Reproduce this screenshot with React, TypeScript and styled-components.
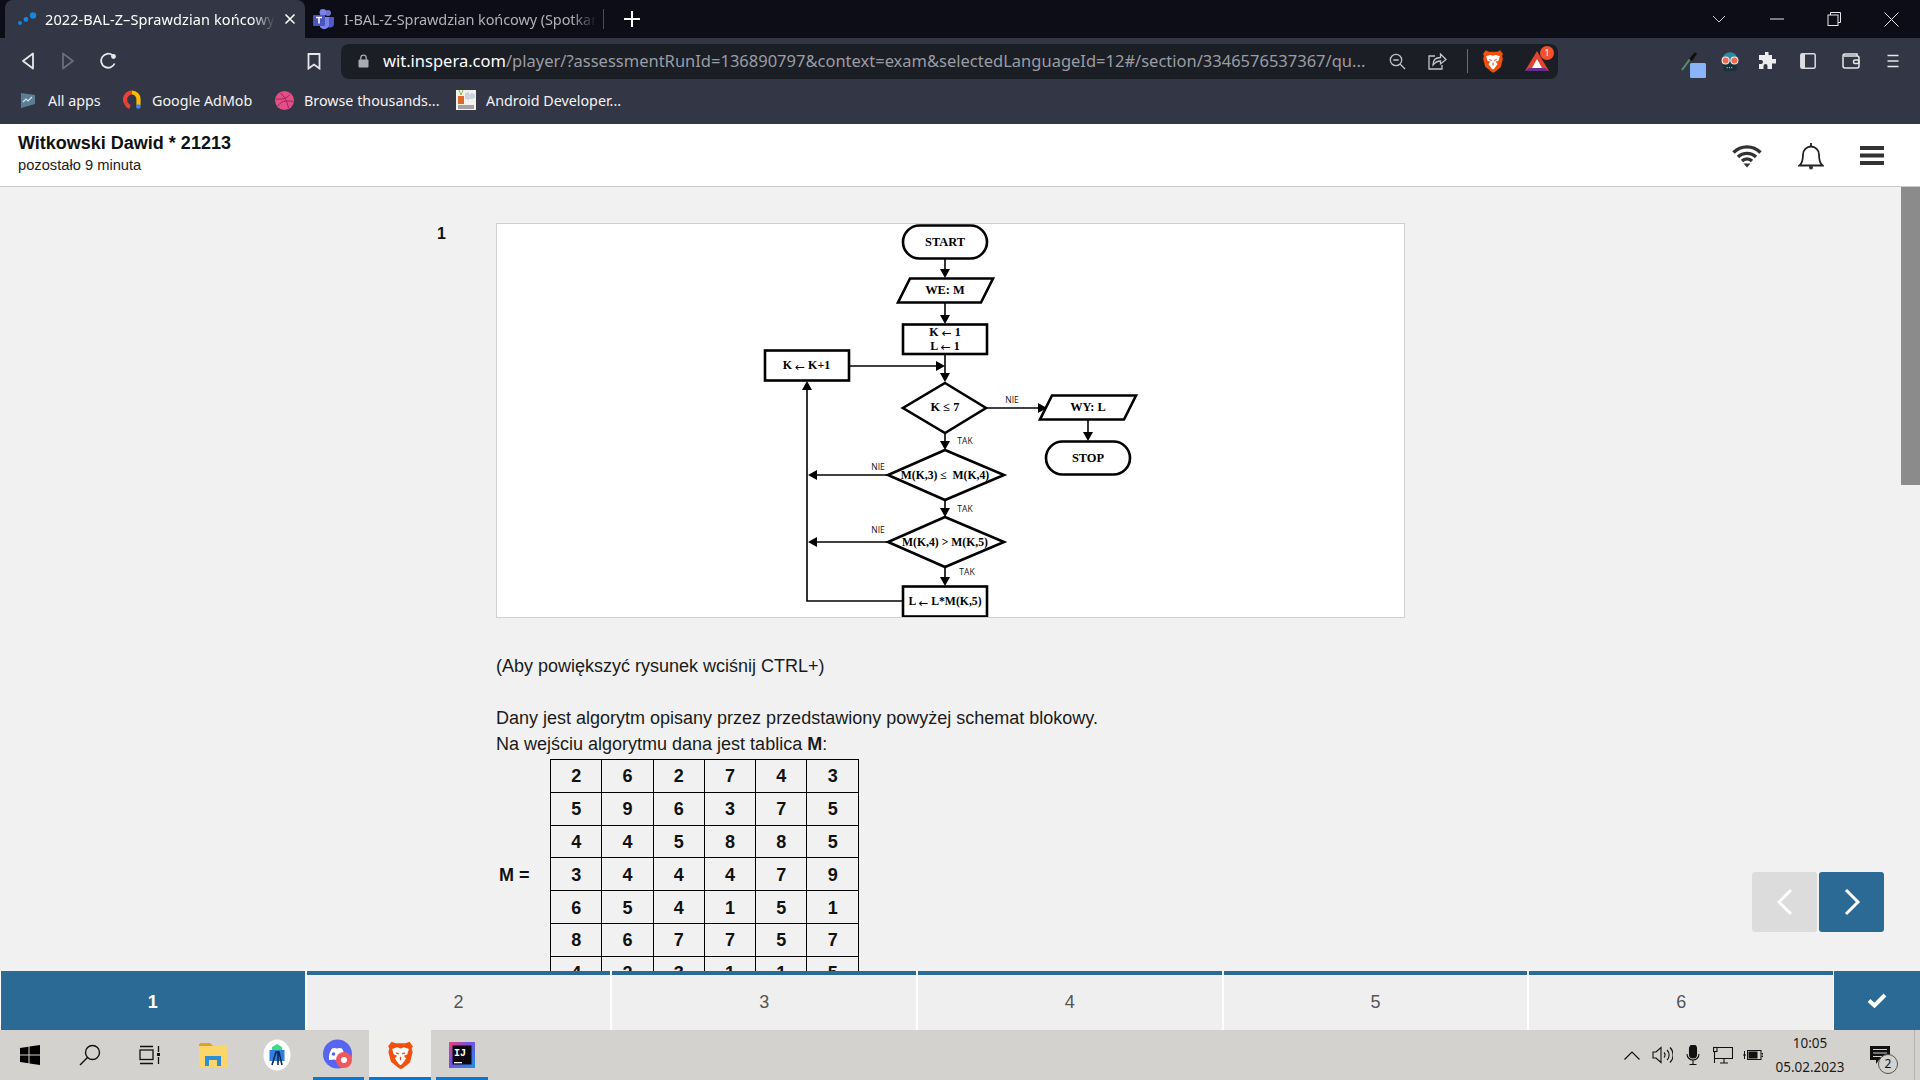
import React from 'react';
import styled, { createGlobalStyle } from 'styled-components';

const BLUE = '#2b6a94';

const GlobalStyle = createGlobalStyle`
    html, body {
        margin: 0;
        padding: 0;
        background: #f1f1f1;
    }
    * {
        box-sizing: border-box;
    }
`;

/* ---------- browser chrome ---------- */

const Page = styled.div`
    width: 1920px;
    height: 1080px;
    display: flex;
    flex-direction: column;
    overflow: hidden;
    position: relative;
    font-family: 'Liberation Sans', Arial, sans-serif;
`;

const TabStrip = styled.div`
    height: 38px;
    flex: none;
    display: flex;
    align-items: stretch;
    background: #0c0d17;
    padding-left: 5px;
    font-family: 'Noto Sans', sans-serif;
    font-size: 14.5px;
`;

const Tab = styled.div<{ $active?: boolean }>`
    width: 300px;
    display: flex;
    align-items: center;
    padding-left: ${(p) => (p.$active ? '12px' : '8px')};
    border-radius: 8px 8px 0 0;
    letter-spacing: ${(p) => (p.$active ? '0.1px' : '-0.1px')};
    color: ${(p) => (p.$active ? '#ffffff' : '#b0b2b8')};
    background: ${(p) => (p.$active ? '#333644' : 'transparent')};
`;

const TabTitle = styled.div<{ $width: number; $ml: number }>`
    width: ${(p) => p.$width}px;
    margin-left: ${(p) => p.$ml}px;
    white-space: nowrap;
    -webkit-mask-image: linear-gradient(to right, #000 90%, transparent 100%);
    mask-image: linear-gradient(to right, #000 90%, transparent 100%);
`;

const TabClose = styled.div`
    margin-left: 9px;
    display: flex;
`;

const TabDivider = styled.div`
    width: 1px;
    height: 20px;
    margin: 9px 0 0 -2px;
    background: #4a4c57;
`;

const NewTab = styled.div`
    margin-left: 20px;
    display: flex;
    align-items: center;
`;

const WindowControls = styled.div`
    margin-left: auto;
    display: flex;
    align-items: center;
`;

const WindowButton = styled.div<{ $w?: number }>`
    width: ${(p) => p.$w ?? 58}px;
    height: 38px;
    display: flex;
    align-items: center;
    justify-content: center;
`;

const Toolbar = styled.div`
    height: 46px;
    flex: none;
    display: flex;
    align-items: center;
    background: #333644;
`;

const NavGroup = styled.div`
    width: 341px;
    flex: none;
    display: flex;
    align-items: center;
    padding-left: 8px;
`;

const ToolButton = styled.div<{ $w?: number; $ml?: number }>`
    width: ${(p) => p.$w ?? 40}px;
    height: 36px;
    flex: none;
    margin-left: ${(p) => p.$ml ?? 0}px;
    display: flex;
    align-items: center;
    justify-content: center;
    position: relative;
`;

const Address = styled.div`
    width: 1217px;
    height: 35px;
    flex: none;
    display: flex;
    align-items: center;
    background: #1c1e26;
    border-radius: 8px;
    padding: 0 0 0 17px;
`;

const UrlText = styled.div`
    width: 984px;
    flex: none;
    margin-left: 14px;
    margin-right: 10px;
    padding-bottom: 2px;
    white-space: nowrap;
    font-family: 'Noto Sans', sans-serif;
    font-size: 16.5px;
    color: #9a9ca3;

    b {
        font-weight: 400;
        color: #ffffff;
    }
`;

const AddressDivider = styled.div`
    width: 1px;
    height: 24px;
    flex: none;
    margin: 0 10px;
    background: #6b6d75;
`;

const Badge = styled.span`
    position: absolute;
    top: 3px;
    right: 3px;
    width: 14px;
    height: 14px;
    border-radius: 50%;
    background: #f4512c;
    color: #ffffff;
    font-family: 'Noto Sans', sans-serif;
    font-size: 9px;
    line-height: 14px;
    text-align: center;
`;

const BookmarkBar = styled.div`
    height: 40px;
    flex: none;
    display: flex;
    align-items: center;
    background: #333644;
    padding: 0 0 8px 20px;
    font-family: 'Noto Sans', sans-serif;
    font-size: 14.3px;
    color: #f2f2f4;
`;

const Bookmark = styled.div<{ $w: number; $gap?: number }>`
    width: ${(p) => p.$w}px;
    flex: none;
    display: flex;
    align-items: center;
    gap: ${(p) => p.$gap ?? 10}px;
    white-space: nowrap;
`;

/* ---------- exam header ---------- */

const Header = styled.header`
    height: 63px;
    flex: none;
    display: flex;
    align-items: center;
    justify-content: space-between;
    background: #ffffff;
    border-bottom: 1px solid #c9c9c9;
    padding: 0 36px 4px 18px;
`;

const Candidate = styled.div`
    font-size: 18px;
    font-weight: 700;
    line-height: 24px;
    color: #111111;
`;

const TimeLeft = styled.div`
    font-size: 14.7px;
    line-height: 20px;
    color: #222222;
`;

const HeaderIcons = styled.div`
    display: flex;
    align-items: center;
    gap: 36px;
    padding-top: 5px;
`;

/* ---------- question ---------- */

const Body = styled.div`
    flex: 1;
    min-height: 0;
    display: flex;
`;

const Content = styled.main`
    flex: 1;
    overflow: hidden;
    display: flex;
    padding: 36px 0 0 437px;
    background: #f1f1f1;
`;

const QuestionNumber = styled.div`
    width: 59px;
    flex: none;
    font-size: 16px;
    font-weight: 700;
    line-height: 22px;
    color: #111111;
`;

const Question = styled.div`
    width: 909px;
    flex: none;
    font-size: 18px;
    line-height: 26px;
    color: #1a1a1a;
`;

const FigureCard = styled.div`
    height: 395px;
    background: #ffffff;
    border: 1px solid #cfcfcf;

    svg {
        display: block;
    }
`;

const Paragraph = styled.p<{ $mt?: number }>`
    margin: ${(p) => p.$mt ?? 0}px 0 0;
`;

const MatrixRow = styled.div`
    display: flex;
    align-items: center;
    margin-top: 2px;
`;

const MatrixLabel = styled.div`
    width: 54px;
    padding: 2px 0 0 3px;
    flex: none;
    font-weight: 700;
    color: #111111;
`;

const Matrix = styled.table`
    border-collapse: collapse;
    font-weight: 700;
    color: #111111;

    td {
        width: 51.3px;
        height: 32.8px;
        padding: 1px 0 0;
        border: 1px solid #000000;
        text-align: center;
    }
`;

const Scrollbar = styled.div`
    width: 19px;
    flex: none;
    background: #f1f1f1;
`;

const ScrollThumb = styled.div`
    height: 298px;
    background: #8b8b8b;
`;

const PagerButtons = styled.div`
    position: absolute;
    left: 1752px;
    top: 872px;
    display: flex;
    gap: 2px;
`;

const PagerButton = styled.div<{ $enabled?: boolean }>`
    width: 65px;
    height: 60px;
    display: flex;
    align-items: center;
    justify-content: center;
    border-radius: 3px;
    background: ${(p) => (p.$enabled ? BLUE : '#dcdcdc')};
`;

const QuestionNav = styled.nav`
    height: 59px;
    flex: none;
    display: flex;
    gap: 2px;
    padding-left: 1px;
    background: #ffffff;
`;

const NavItem = styled.div<{ $current?: boolean }>`
    flex: 1;
    display: flex;
    align-items: center;
    justify-content: center;
    border-top: 4px solid ${BLUE};
    background: ${(p) => (p.$current ? BLUE : '#efefef')};
    color: ${(p) => (p.$current ? '#ffffff' : '#555555')};
    font-size: 18px;
    font-weight: ${(p) => (p.$current ? 700 : 400)};
`;

const SubmitItem = styled.div`
    width: 86px;
    flex: none;
    margin-left: -1px;
    display: flex;
    align-items: center;
    justify-content: center;
    background: ${BLUE};
`;

/* ---------- windows taskbar ---------- */

const Taskbar = styled.footer`
    height: 50px;
    flex: none;
    display: flex;
    align-items: stretch;
    background: #d3d2cf;
`;

const TaskItem = styled.div<{ $w: number; $active?: boolean; $running?: boolean }>`
    width: ${(p) => p.$w}px;
    flex: none;
    display: flex;
    align-items: center;
    justify-content: center;
    position: relative;
    background: ${(p) => (p.$active ? '#efefed' : 'transparent')};

    &::after {
        content: '';
        display: ${(p) => (p.$running ? 'block' : 'none')};
        position: absolute;
        left: ${(p) => (p.$active ? 0 : 5)}px;
        right: ${(p) => (p.$active ? 0 : 5)}px;
        bottom: 0;
        height: 3px;
        background: #0a78d0;
    }
`;

const Tray = styled.div`
    margin-left: auto;
    display: flex;
    align-items: center;
    padding-right: 5px;
`;

const TrayIcon = styled.div<{ $w: number }>`
    width: ${(p) => p.$w}px;
    height: 100%;
    flex: none;
    display: flex;
    align-items: center;
    justify-content: center;
`;

const Clock = styled.div`
    width: 70px;
    flex: none;
    margin-left: 9px;
    text-align: center;
    white-space: nowrap;
    font-family: 'Noto Sans', sans-serif;
    font-size: 13.5px;
    line-height: 24px;
    color: #1c1c1c;
`;

const Notifications = styled.div`
    width: 70px;
    height: 100%;
    flex: none;
    display: flex;
    align-items: center;
    justify-content: center;
    position: relative;
    border-right: 1px solid #b5b4b1;
`;

const NotificationCount = styled.span`
    position: absolute;
    left: 33px;
    top: 24px;
    width: 20px;
    height: 20px;
    border: 1px solid #555555;
    border-radius: 50%;
    background: #d3d2cf;
    color: #111111;
    font-family: 'Noto Sans', sans-serif;
    font-size: 12px;
    line-height: 18px;
    text-align: center;
`;

/* ---------- icons ---------- */

const BraveLogo = ({ size }: { size: number }) => (
    <svg width={size} height={size * 1.12} viewBox="0 0 24 27">
        <path d="M4 1.5 7.5 3h9L20 1.5l3 4-1 2 .8 3.5-2.3 9-6.5 5.3L12 26l-2-1.2-6.5-5.3L1.2 11 2 7.5l-1-2z" fill="#f1500f" />
        <path d="M4.5 8 9 6.5l3 1 3-1L19.5 8 18 13l-3 1 2 2.5-3.500 5-1.500 1-1.500-1L7 16.500 9 14l-3-1z" fill="#ffffff" />
        <path d="M8 11.500l2.500 1M16 11.500l-2.500 1M12 15v3" stroke="#f1500f" strokeWidth="1.2" />
    </svg>
);

const Chevron = ({ left }: { left?: boolean }) => (
    <svg width="20" height="30" viewBox="0 0 20 30" fill="none" stroke="#ffffff" strokeWidth="3">
        <path d={left ? 'M16 3 4 15l12 12' : 'M4 3l12 12L4 27'} />
    </svg>
);

// the picture uses a symbol font for the arrow, the serif one draws it far too short
const nodeLabel = (text: string) =>
    text.split('←').map((part, i) => (
        <React.Fragment key={i}>
            {i > 0 && (
                <tspan fontFamily="'DejaVu Sans', sans-serif" fontWeight="400">
                    ←
                </tspan>
            )}
            {part}
        </React.Fragment>
    ));

const Flowchart = () => {
    const ink = '#000000';
    const down = (x: number, tip: number) => `${x - 5},${tip - 9} ${x + 5},${tip - 9} ${x},${tip}`;
    const vArrows: [number, number, number][] = [
        [945, 259, 278],
        [945, 303, 324],
        [945, 354, 382],
        [1088, 420, 441],
        [945, 433, 450],
        [945, 500, 517],
        [945, 567, 586],
    ];
    const labels: [number, number, string][] = [
        [1012, 400.5, 'NIE'],
        [965, 442, 'TAK'],
        [878, 468, 'NIE'],
        [965, 510, 'TAK'],
        [878, 531, 'NIE'],
        [967, 573, 'TAK'],
    ];
    const nodes: [number, number, string, number][] = [
        [945, 243.5, 'START', 12.4],
        [945, 291.5, 'WE: M', 12.4],
        [945, 333, 'K ← 1', 12],
        [945, 347, 'L ← 1', 12],
        [806.5, 366.5, 'K ← K+1', 12],
        [945, 408.5, 'K ≤ 7', 12.4],
        [1088, 408.5, 'WY: L', 12.4],
        [1088, 459.5, 'STOP', 12.4],
        [945, 476.5, 'M(K,3) ≤  M(K,4)', 11.7],
        [945, 543.5, 'M(K,4) > M(K,5)', 11.7],
        [945, 602.5, 'L ← L*M(K,5)', 11.7],
    ];

    return (
        <svg width="907" height="393" viewBox="497 224 907 393">
            <g fill="#ffffff" stroke={ink} strokeWidth="2.6">
                <rect x="903" y="225.5" width="84" height="33" rx="16.5" />
                <polygon points="910,278.5 993,278.5 981,302.5 898,302.5" />
                <rect x="903" y="324.5" width="84" height="29.5" />
                <rect x="765" y="350.5" width="84" height="30" />
                <polygon points="945,383 986,408 945,433 903,408" />
                <polygon points="1052,395.5 1136,395.5 1124,419.5 1040,419.5" />
                <rect x="1046" y="441.5" width="84" height="33" rx="16.5" />
                <polygon points="945,450 1004,475 945,500 888,475" />
                <polygon points="945,517 1004,542 945,567 888,542" />
                <rect x="903" y="586.5" width="84" height="30" />
            </g>
            <g fill="none" stroke={ink} strokeWidth="1.6">
                {vArrows.map(([x, from, to]) => (
                    <line key={`${x}-${from}`} x1={x} y1={from} x2={x} y2={to - 6} />
                ))}
                <line x1="849" y1="366" x2="940" y2="366" />
                <line x1="987" y1="408" x2="1040" y2="408" />
                <line x1="887" y1="475" x2="812" y2="475" />
                <line x1="887" y1="542" x2="812" y2="542" />
                <polyline points="903,601 807,601 807,388" />
            </g>
            <g fill={ink}>
                {vArrows.map(([x, from, to]) => (
                    <polygon key={`${x}-${from}`} points={down(x, to)} />
                ))}
                <polygon points="945,366 936,361 936,371" />
                <polygon points="1047,408 1038,403 1038,413" />
                <polygon points="808,475 817,470 817,480" />
                <polygon points="808,542 817,537 817,547" />
                <polygon points="807,381 802,390 812,390" />
            </g>
            <g fontFamily="'Liberation Serif', serif" fontWeight="700" textAnchor="middle" fill={ink} stroke="none">
                {nodes.map(([x, y, text, size]) => (
                    <text key={text} x={x} y={y} fontSize={size} dominantBaseline="middle" xmlSpace="preserve">
                        {nodeLabel(text)}
                    </text>
                ))}
            </g>
            <g fontFamily="'Open Sans', sans-serif" fontSize="8.5" textAnchor="middle" fill="#111111">
                {labels.map(([x, y, text]) => (
                    <text key={`${text}-${y}`} x={x} y={y} dominantBaseline="middle">
                        {text}
                    </text>
                ))}
            </g>
        </svg>
    );
};

const MATRIX = [
    [2, 6, 2, 7, 4, 3],
    [5, 9, 6, 3, 7, 5],
    [4, 4, 5, 8, 8, 5],
    [3, 4, 4, 4, 7, 9],
    [6, 5, 4, 1, 5, 1],
    [8, 6, 7, 7, 5, 7],
    [4, 2, 3, 1, 1, 5],
];

export default function App() {
    return (
        <Page>
            <GlobalStyle />
            <TabStrip>
                <Tab $active>
                    <svg width="22" height="14" viewBox="0 0 22 14" fill="#1486e0">
                        <circle cx="3" cy="11" r="2" />
                        <circle cx="9" cy="7.5" r="2.4" />
                        <circle cx="16" cy="3.5" r="3.2" />
                    </svg>
                    <TabTitle $width={230} $ml={6}>2022-BAL-Z–Sprawdzian końcowy</TabTitle>
                    <TabClose>
                        <svg width="12" height="12" viewBox="0 0 12 12" stroke="#ffffff" strokeWidth="1.6">
                            <path d="M1.5 1.5l9 9M10.5 1.5l-9 9" />
                        </svg>
                    </TabClose>
                </Tab>
                <Tab>
                    <svg width="22" height="21" viewBox="0 0 22 21">
                        <circle cx="15" cy="4" r="3" fill="#6f74c9" />
                        <circle cx="10" cy="3.4" r="3.4" fill="#7b83eb" />
                        <path d="M12 8h9v6.5a4 4 0 0 1-4 4h-1l-4-1z" fill="#5059c9" />
                        <path d="M7 8h9v8a5 5 0 0 1-9 2z" fill="#7b83eb" />
                        <rect x="0" y="6" width="12" height="11" rx="1" fill="#4b53bc" />
                        <path d="M3 8.5h6M6 8.5v6" stroke="#ffffff" strokeWidth="1.6" />
                    </svg>
                    <TabTitle $width={253} $ml={9}>I-BAL-Z-Sprawdzian końcowy (Spotkan</TabTitle>
                </Tab>
                <TabDivider />
                <NewTab>
                    <svg width="16" height="16" viewBox="0 0 16 16" stroke="#ffffff" strokeWidth="2">
                        <path d="M8 0v16M0 8h16" />
                    </svg>
                </NewTab>
                <WindowControls>
                    <WindowButton>
                        <svg width="14" height="8" viewBox="0 0 14 8" fill="none" stroke="#c9cad0">
                            <path d="M1 1l6 6 6-6" />
                        </svg>
                    </WindowButton>
                    <WindowButton>
                        <svg width="14" height="2" viewBox="0 0 14 2" stroke="#e8e8ea">
                            <path d="M0 1h14" />
                        </svg>
                    </WindowButton>
                    <WindowButton $w={56}>
                        <svg width="14" height="14" viewBox="0 0 14 14" fill="none" stroke="#e8e8ea">
                            <path d="M3.5 3V.5h10v10H11" />
                            <rect x="1" y="3" width="10" height="10.5" />
                        </svg>
                    </WindowButton>
                    <WindowButton>
                        <svg width="15" height="15" viewBox="0 0 15 15" stroke="#e8e8ea">
                            <path d="M.5.5l14 14M14.5.5l-14 14" />
                        </svg>
                    </WindowButton>
                </WindowControls>
            </TabStrip>

            <Toolbar>
                <NavGroup>
                    <ToolButton>
                        <svg width="14" height="18" viewBox="0 0 14 18" fill="none" stroke="#e8e8ea" strokeWidth="1.8" strokeLinejoin="round">
                            <path d="M12 1.5v15L2 9z" />
                        </svg>
                    </ToolButton>
                    <ToolButton>
                        <svg width="14" height="18" viewBox="0 0 14 18" fill="none" stroke="#6b6d78" strokeWidth="1.8" strokeLinejoin="round">
                            <path d="M2 1.5v15L12 9z" />
                        </svg>
                    </ToolButton>
                    <ToolButton>
                        <svg width="18" height="18" viewBox="0 0 18 18" fill="none" stroke="#e8e8ea" strokeWidth="1.8">
                            <path d="M15.6 11.5A7 7 0 1 1 13.5 3.2" />
                            <circle cx="14.5" cy="4.5" r="2.4" fill="#e8e8ea" stroke="none" />
                        </svg>
                    </ToolButton>
                    <ToolButton $ml={166}>
                        <svg width="14" height="17" viewBox="0 0 14 17" fill="none" stroke="#e8e8ea" strokeWidth="1.8">
                            <path d="M1.5 1h11v14.5L7 11.5l-5.5 4z" />
                        </svg>
                    </ToolButton>
                </NavGroup>
                <Address>
                    <svg width="11" height="14" viewBox="0 0 11 14" fill="#a9abb1">
                        <rect x=".5" y="5.5" width="10" height="8" rx="1" />
                        <path d="M2.8 6V3.8a2.7 2.7 0 0 1 5.4 0V6" fill="none" stroke="#a9abb1" strokeWidth="1.3" />
                    </svg>
                    <UrlText>
                        <b>wit.inspera.com</b>/player/?assessmentRunId=136890797&context=exam&selectedLanguageId=12#/section/3346576537367/qu...
                    </UrlText>
                    <ToolButton>
                        <svg width="17" height="17" viewBox="0 0 17 17" fill="none" stroke="#c3c4c9" strokeWidth="1.3">
                            <circle cx="7" cy="7" r="5.7" />
                            <path d="M4.3 7h5.4M11 11l5 5" />
                        </svg>
                    </ToolButton>
                    <ToolButton>
                        <svg width="19" height="17" viewBox="0 0 19 17" fill="none" stroke="#c3c4c9" strokeWidth="1.3">
                            <path d="M7 3H1v13h13v-4" />
                            <path d="M5 12c0-5 3-7.5 7.5-7.5V1L18 6.5 12.5 11V8C9.500 8 7 9.500 5 12z" />
                        </svg>
                    </ToolButton>
                    <AddressDivider />
                    <ToolButton $w={30}>
                        <BraveLogo size={22} />
                    </ToolButton>
                    <ToolButton $ml={9}>
                        <svg width="24" height="20" viewBox="0 0 24 20">
                            <path d="M12 0 24 20H0z" fill="#e0442c" />
                            <path d="M12 8l5 9H7z" fill="#ffffff" />
                            <path d="M0 20l4-3h16l4 3z" fill="#662d91" />
                        </svg>
                        <Badge>1</Badge>
                    </ToolButton>
                </Address>
                <ToolButton $ml={114}>
                    <svg width="28" height="34" viewBox="0 0 28 34">
                        <path d="M4 26 12 15" stroke="#5d8f63" strokeWidth="2" fill="none" />
                        <path d="M11 15l6-7 2 2-5 7z" fill="#101010" />
                        <rect x="12" y="19" width="16" height="15" rx="1.5" fill="#8ab4f8" />
                    </svg>
                </ToolButton>
                <ToolButton $w={35}>
                    <svg width="22" height="22" viewBox="0 0 20 20">
                        <path d="M3 9a7 7 0 0 1 14 0v2H3z" fill="#2f8a9e" />
                        <path d="M4 11h12v8H4z" fill="#16323c" />
                        <circle cx="6" cy="9.5" r="3.2" fill="#f26b50" stroke="#eeeeee" />
                        <circle cx="14" cy="9.5" r="3.2" fill="#f26b50" stroke="#eeeeee" />
                        <path d="M7 16h6" stroke="#8fb9c4" strokeDasharray="1 1" />
                    </svg>
                </ToolButton>
                <ToolButton>
                    <svg width="18" height="18" viewBox="0 0 18 18" fill="#ececee">
                        <path d="M7 0h3.5v3H14v4h4v4.500h-4V17H9.500v-3a2 2 0 0 0-4 0v3H1v-5h2a2 2 0 0 0 0-4H1V3h6z" />
                    </svg>
                </ToolButton>
                <ToolButton $w={42}>
                    <svg width="16" height="16" viewBox="0 0 16 16">
                        <rect x=".8" y=".8" width="14.4" height="14.4" rx="1.5" fill="none" stroke="#dcdce0" strokeWidth="1.5" />
                        <rect x="1" y="1" width="4" height="14" fill="#dcdce0" />
                    </svg>
                </ToolButton>
                <ToolButton $w={43}>
                    <svg width="18" height="16" viewBox="0 0 18 16" fill="none" stroke="#e8e8ea" strokeWidth="1.5">
                        <path d="M15 3V1H3a2 2 0 0 0-2 2v10a2 2 0 0 0 2 2h12a2 2 0 0 0 2-2V5a2 2 0 0 0-2-2H2" />
                        <rect x="11.5" y="7" width="5.5" height="3.5" rx="1.5" />
                    </svg>
                </ToolButton>
                <ToolButton $w={41}>
                    <svg width="14" height="14" viewBox="0 0 14 14" stroke="#e8e8ea" strokeWidth="1.6">
                        <path d="M1.5 1.5h11M1.5 7h11M1.5 12.5h11" />
                    </svg>
                </ToolButton>
            </Toolbar>

            <BookmarkBar>
                <Bookmark $w={102} $gap={12}>
                    <svg width="16" height="17" viewBox="0 0 16 17">
                        <path d="M1 1l14 2v9L1 16z" fill="#5b7f92" />
                        <path d="M3 10l3-3 2 2 4-4" fill="none" stroke="#cfe3ee" strokeWidth="1.2" />
                    </svg>
                    All apps
                </Bookmark>
                <Bookmark $w={153}>
                    <svg width="20" height="20" viewBox="0 0 20 20" fill="none" strokeWidth="4.2">
                        <path d="M10 2.5a7 7 0 0 0-6 10.5" stroke="#ea4335" />
                        <path d="M4 13a7 7 0 0 0 4 4" stroke="#ea4335" />
                        <path d="M10 2.5A6.500 6.500 0 0 1 16.500 9v6" stroke="#fbbc04" />
                        <circle cx="16.3" cy="16.5" r="2.3" fill="#4285f4" stroke="none" />
                    </svg>
                    Google AdMob
                </Bookmark>
                <Bookmark $w={181}>
                    <svg width="19" height="19" viewBox="0 0 19 19" fill="none">
                        <circle cx="9.5" cy="9.5" r="9.5" fill="#e24e87" />
                        <path d="M5.5 2c4 3.500 7 9 8 15M1 8c6 .5 10 0 14-4.500M3 15c2.500-4.500 7-6 15-4.500" stroke="#a81f58" strokeWidth="1" />
                    </svg>
                    Browse thousands...
                </Bookmark>
                <Bookmark $w={200}>
                    <svg width="20" height="20" viewBox="0 0 20 20">
                        <rect width="20" height="20" fill="#f4f1ec" />
                        <rect x="2" y="6" width="6" height="8" fill="#e0662f" />
                        <path d="M3 0l2 5 2-5" fill="none" stroke="#8dbb3d" />
                        <path d="M10 3v6M12 2v8M14 4v5M16 3v6M18 4v4" stroke="#9db7cc" />
                        <path d="M2 16h16M2 18h16" stroke="#555555" />
                    </svg>
                    Android Developer...
                </Bookmark>
            </BookmarkBar>

            <Header>
                <div>
                    <Candidate>Witkowski Dawid * 21213</Candidate>
                    <TimeLeft>pozostało 9 minuta</TimeLeft>
                </div>
                <HeaderIcons>
                    <svg width="30" height="24" viewBox="0 0 30 24" fill="none" stroke="#333333" strokeWidth="3.4">
                        <path d="M1.5 8.500a19 19 0 0 1 27 0M6 13a13 13 0 0 1 18 0M10 17a7 7 0 0 1 10 0" />
                        <path d="M15 23.500l-3.500-4h7z" fill="#333333" stroke="none" />
                    </svg>
                    <svg width="26" height="28" viewBox="0 0 26 28" fill="none" stroke="#222222" strokeWidth="1.8">
                        <path d="M1.5 23.500c3-2.500 3.500-6 3.500-11a8 8 0 0 1 16 0c0 5 .5 8.500 3.500 11z" />
                        <path d="M13 1v3.500" />
                        <circle cx="13" cy="25.5" r="2" fill="#333333" stroke="none" />
                    </svg>
                    <svg width="24" height="19" viewBox="0 0 24 19" fill="#333333">
                        <rect width="24" height="4" y="0" />
                        <rect width="24" height="4" y="7.5" />
                        <rect width="24" height="4" y="15" />
                    </svg>
                </HeaderIcons>
            </Header>

            <Body>
                <Content>
                    <QuestionNumber>1</QuestionNumber>
                    <Question>
                        <FigureCard>
                            <Flowchart />
                        </FigureCard>
                        <Paragraph $mt={35}>(Aby powiększyć rysunek wciśnij CTRL+)</Paragraph>
                        <Paragraph $mt={26}>Dany jest algorytm opisany przez przedstawiony powyżej schemat blokowy.</Paragraph>
                        <Paragraph>
                            Na wejściu algorytmu dana jest tablica <strong>M</strong>:
                        </Paragraph>
                        <MatrixRow>
                            <MatrixLabel>M =</MatrixLabel>
                            <Matrix>
                                <tbody>
                                    {MATRIX.map((row, r) => (
                                        <tr key={r}>
                                            {row.map((value, c) => (
                                                <td key={c}>{value}</td>
                                            ))}
                                        </tr>
                                    ))}
                                </tbody>
                            </Matrix>
                        </MatrixRow>
                    </Question>
                </Content>
                <Scrollbar>
                    <ScrollThumb />
                </Scrollbar>
            </Body>

            <PagerButtons>
                <PagerButton>
                    <Chevron left />
                </PagerButton>
                <PagerButton $enabled>
                    <Chevron />
                </PagerButton>
            </PagerButtons>

            <QuestionNav>
                {[1, 2, 3, 4, 5, 6].map((n) => (
                    <NavItem key={n} $current={n === 1}>
                        {n}
                    </NavItem>
                ))}
                <SubmitItem>
                    <svg width="20" height="15" viewBox="0 0 20 15" fill="none" stroke="#ffffff" strokeWidth="4">
                        <path d="M2 7.5l5.5 5L18 2" />
                    </svg>
                </SubmitItem>
            </QuestionNav>

            <Taskbar>
                <TaskItem $w={60}>
                    <svg width="20" height="20" viewBox="0 0 20 20" fill="#000000">
                        <path d="M0 3l8.500-1.200v7.600H0zM9.500 1.600 20 0v9.400H9.500zM0 10.400h8.500v7.800L0 17zM9.500 10.400H20V20L9.500 18.400z" />
                    </svg>
                </TaskItem>
                <TaskItem $w={60}>
                    <svg width="22" height="22" viewBox="0 0 22 22" fill="none" stroke="#111111" strokeWidth="1.4">
                        <circle cx="13.5" cy="8.5" r="7" />
                        <path d="M8.5 13.5 1 21" />
                    </svg>
                </TaskItem>
                <TaskItem $w={60}>
                    <svg width="22" height="20" viewBox="0 0 22 20" fill="none" stroke="#111111" strokeWidth="1.3">
                        <rect x="1" y="5" width="13" height="9.5" />
                        <path d="M1 1.5h13M1 18.5h13M19.5 1v6M19.5 12v7" />
                        <rect x="18" y="8" width="3" height="3" fill="#111111" stroke="none" />
                    </svg>
                </TaskItem>
                <TaskItem $w={66}>
                    <svg width="28" height="24" viewBox="0 0 28 24">
                        <path d="M0 2a2 2 0 0 1 2-2h9l3 3H0z" fill="#e0a11b" />
                        <rect y="3" width="28" height="21" rx="1" fill="#fcd66a" />
                        <path d="M6 23V13h16v10h-4v-6h-8v6z" fill="#2f8fd6" />
                    </svg>
                </TaskItem>
                <TaskItem $w={62}>
                    <svg width="28" height="32" viewBox="0 0 28 32">
                        <ellipse cx="14" cy="16" rx="13.5" ry="15.5" fill="#ffffff" />
                        <path d="M14 5l5 3v3H9V8z" fill="#3ddc84" />
                        <rect x="6.5" y="11" width="15" height="11" fill="#2f7fe0" />
                        <path d="M9 26l4-13h3l3 13M15 12v14" fill="none" stroke="#102a56" strokeWidth="1.6" />
                    </svg>
                </TaskItem>
                <TaskItem $w={61} $running>
                    <svg width="32" height="32" viewBox="0 0 32 32">
                        <circle cx="14.5" cy="15" r="14.5" fill="#5865f2" />
                        <path d="M6 21c-.5-5 1-9 3-11.500 2-.7 3.500-.7 5 0 1.500-.7 3-.7 5 0l2 4-7 8.500-2-1.500z" fill="#ffffff" />
                        <circle cx="10.5" cy="15" r="1.8" fill="#5865f2" />
                        <circle cx="21" cy="21" r="8" fill="#f0585f" />
                        <circle cx="21" cy="21" r="3" fill="#ffffff" />
                    </svg>
                </TaskItem>
                <TaskItem $w={62} $active $running>
                    <BraveLogo size={27} />
                </TaskItem>
                <TaskItem $w={62} $running>
                    <svg width="26" height="26" viewBox="0 0 26 26">
                        <defs>
                            <linearGradient id="ij-frame" x1="0" y1="0" x2="1" y2="1">
                                <stop offset="0" stopColor="#f0406f" />
                                <stop offset="0.4" stopColor="#7a4de0" />
                                <stop offset="1" stopColor="#1e8fe8" />
                            </linearGradient>
                        </defs>
                        <rect width="26" height="26" fill="url(#ij-frame)" />
                        <rect x="3.5" y="3.5" width="19" height="19" fill="#0b0710" />
                        <rect x="5" y="20" width="8" height="1.3" fill="#ffffff" />
                        <text x="5" y="13.5" fontFamily="'Liberation Mono', monospace" fontSize="10" fontWeight="700" fill="#ffffff">IJ</text>
                    </svg>
                </TaskItem>
                <Tray>
                    <TrayIcon $w={26}>
                        <svg width="16" height="9" viewBox="0 0 16 9" fill="none" stroke="#111111" strokeWidth="1.2">
                            <path d="M.5 8.500 8 1l7.500 7.500" />
                        </svg>
                    </TrayIcon>
                    <TrayIcon $w={34}>
                        <svg width="21" height="18" viewBox="0 0 21 18" fill="none" stroke="#111111" strokeWidth="1.1">
                            <path d="M1 6h3l5-4.500v15L4 12H1zM12 6.500a3.500 3.500 0 0 1 0 5M15 4a7 7 0 0 1 0 10M18 1.500a10.500 10.500 0 0 1 0 15" />
                        </svg>
                    </TrayIcon>
                    <TrayIcon $w={27}>
                        <svg width="14" height="20" viewBox="0 0 14 20" fill="none" stroke="#111111" strokeWidth="1.1">
                            <rect x="3.5" y="0" width="7" height="13" rx="3.5" fill="#111111" />
                            <path d="M1 9a6 6 0 0 0 12 0M7 15v4M3.5 19.5h7" />
                        </svg>
                    </TrayIcon>
                    <TrayIcon $w={34}>
                        <svg width="20" height="18" viewBox="0 0 20 18" fill="none" stroke="#111111" strokeWidth="1.1">
                            <path d="M4 1.500h15.500v11H1M11 12.500v4M7 17h8M1.500 1.500V17" />
                            <rect x=".5" y="1.5" width="3.5" height="4" fill="#d3d2cf" />
                        </svg>
                    </TrayIcon>
                    <TrayIcon $w={26}>
                        <svg width="20" height="12" viewBox="0 0 20 12" fill="none" stroke="#111111">
                            <rect x="4.5" y="1.5" width="13.5" height="9" />
                            <rect x="6" y="3" width="8" height="6" fill="#111111" />
                            <path d="M18.5 4.500H20v3h-1.500M0 6h3M1.500 2v8" />
                        </svg>
                    </TrayIcon>
                    <Clock>
                        10:05
                        <br />
                        05.02.2023
                    </Clock>
                    <Notifications>
                        <svg width="20" height="18" viewBox="0 0 20 18" fill="#111111">
                            <path d="M0 0h20v14H9l-3 4v-4H0z" />
                            <path d="M3 3.5h14M3 7h14M3 10.5h9" stroke="#d3d2cf" strokeWidth="1" />
                        </svg>
                        <NotificationCount>2</NotificationCount>
                    </Notifications>
                </Tray>
            </Taskbar>
        </Page>
    );
}
